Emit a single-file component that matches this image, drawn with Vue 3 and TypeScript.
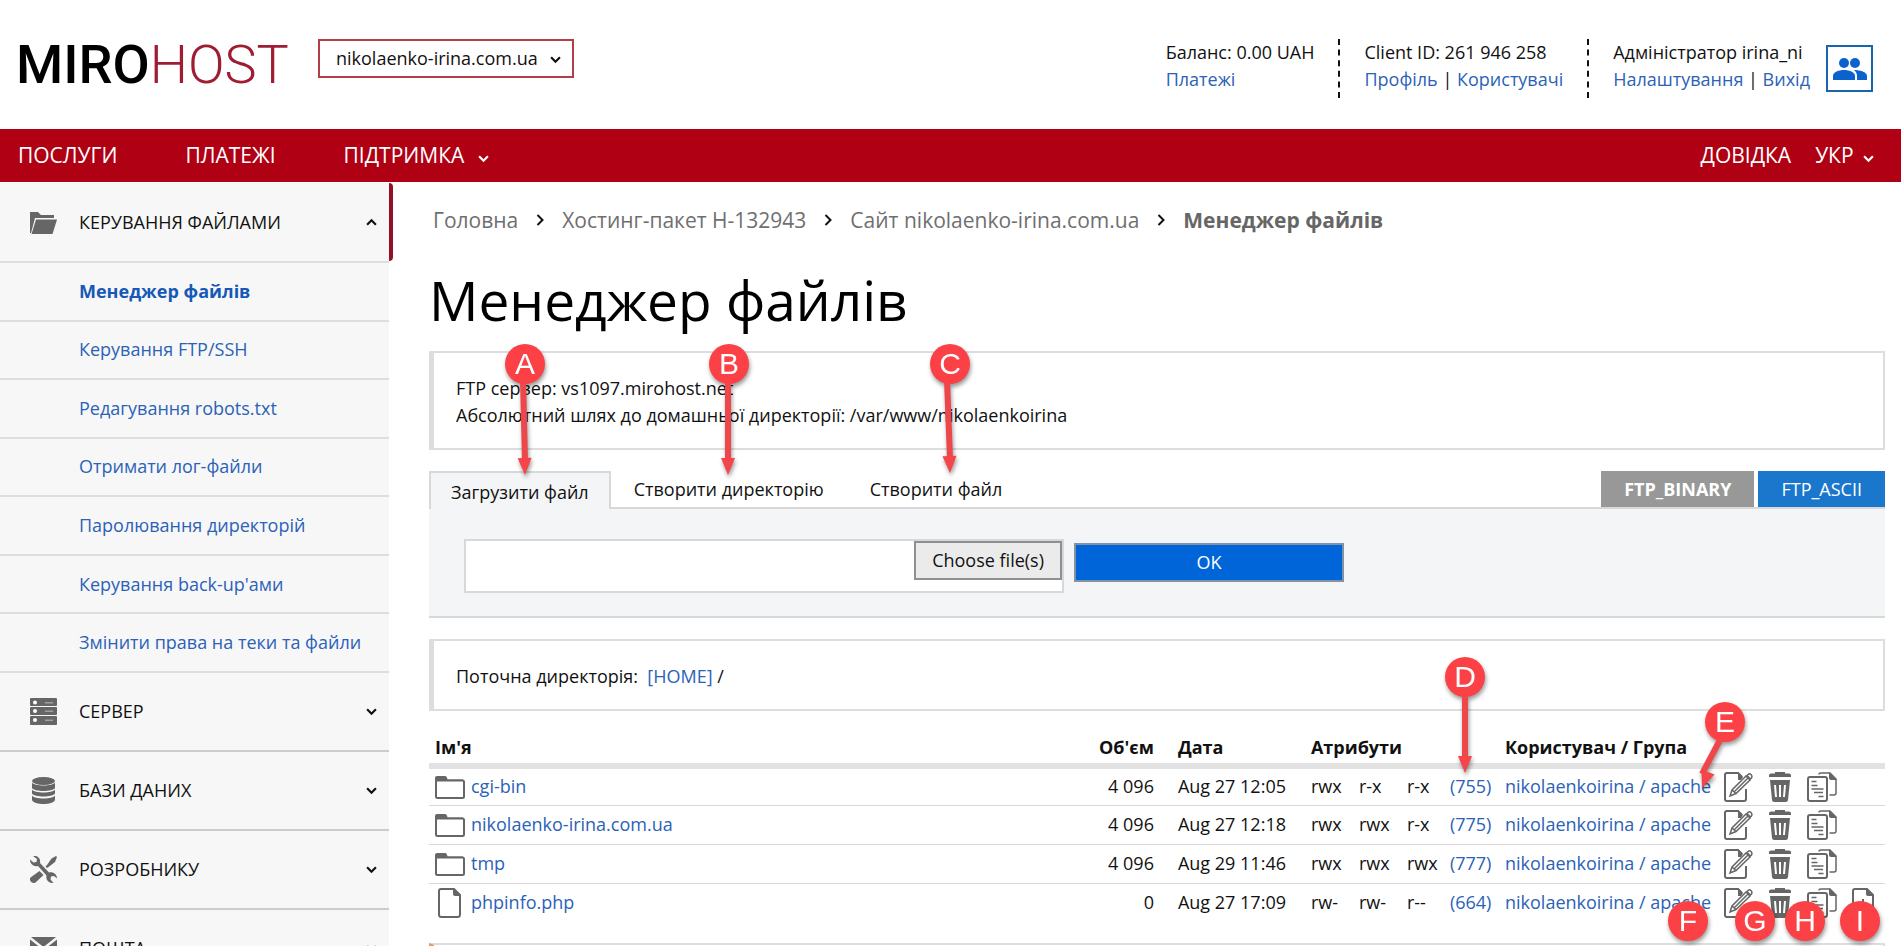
<script setup lang="ts">
import { ref } from 'vue'

interface FileRow {
  name: string
  kind: 'folder' | 'file'
  size: string
  date: string
  attrs: [string, string, string]
  mode: string
  owner: string
}

interface Marker {
  letter: string
  x: number
  y: number
  from?: [number, number]
  to?: [number, number]
}

const site = ref('nikolaenko-irina.com.ua')
const chosenFile = ref('')

const fileLinks: string[] = [
  'Менеджер файлів',
  'Керування FTP/SSH',
  'Редагування robots.txt',
  'Отримати лог-файли',
  'Паролювання директорій',
  "Керування back-up'ами",
  'Змінити права на теки та файли',
]

const sections: { label: string; icon: string }[] = [
  { label: 'СЕРВЕР', icon: 'server' },
  { label: 'БАЗИ ДАНИХ', icon: 'database' },
  { label: 'РОЗРОБНИКУ', icon: 'tools' },
  { label: 'ПОШТА', icon: 'mail' },
]

const crumbs: string[] = ['Головна', 'Хостинг-пакет Н-132943', 'Сайт nikolaenko-irina.com.ua']

const owner = 'nikolaenkoirina / apache'
const rows: FileRow[] = [
  { name: 'cgi-bin', kind: 'folder', size: '4 096', date: 'Aug 27 12:05', attrs: ['rwx', 'r-x', 'r-x'], mode: '(755)', owner },
  { name: 'nikolaenko-irina.com.ua', kind: 'folder', size: '4 096', date: 'Aug 27 12:18', attrs: ['rwx', 'rwx', 'r-x'], mode: '(775)', owner },
  { name: 'tmp', kind: 'folder', size: '4 096', date: 'Aug 29 11:46', attrs: ['rwx', 'rwx', 'rwx'], mode: '(777)', owner },
  { name: 'phpinfo.php', kind: 'file', size: '0', date: 'Aug 27 17:09', attrs: ['rw-', 'rw-', 'r--'], mode: '(664)', owner },
]

const markers: Marker[] = [
  { letter: 'A', x: 525, y: 364, from: [523, 380], to: [525, 475] },
  { letter: 'B', x: 729, y: 364, from: [728, 380], to: [728, 475] },
  { letter: 'C', x: 950, y: 364, from: [947, 380], to: [950, 473] },
  { letter: 'D', x: 1465, y: 677, from: [1465, 693], to: [1465, 773] },
  { letter: 'E', x: 1725, y: 722, from: [1721, 738], to: [1702, 788] },
  { letter: 'F', x: 1688, y: 921 },
  { letter: 'G', x: 1755, y: 921 },
  { letter: 'H', x: 1805, y: 921 },
  { letter: 'I', x: 1860, y: 921 },
]

function arrowHead(m: Marker): string {
  if (!m.from || !m.to) return ''
  const [x1, y1] = m.from
  const [x2, y2] = m.to
  const len = Math.hypot(x2 - x1, y2 - y1)
  const ux = (x2 - x1) / len
  const uy = (y2 - y1) / len
  const bx = x2 - ux * 17
  const by = y2 - uy * 17
  return `${x2},${y2} ${bx - uy * 7},${by + ux * 7} ${bx + uy * 7},${by - ux * 7}`
}
</script>

<template>
  <div class="page">
    <header class="top">
      <a class="logo" href="#" aria-label="MIROHOST"><span class="logo-a">MIRO</span><span class="logo-b">HOST</span></a>
      <div class="site">
        <select v-model="site" aria-label="Сайт">
          <option>nikolaenko-irina.com.ua</option>
        </select>
        <svg class="chev" viewBox="0 0 10 8"><path d="M1 2l4 4 4-4" /></svg>
      </div>
      <div class="account">
        <div class="acc">
          <span>Баланс: 0.00 UAH</span>
          <span><a href="#">Платежі</a></span>
        </div>
        <div class="acc">
          <span>Client ID: 261 946 258</span>
          <span><a href="#">Профіль</a> | <a href="#">Користувачі</a></span>
        </div>
        <div class="acc">
          <span>Адміністратор irina_ni</span>
          <span><a href="#">Налаштування</a> | <a href="#">Вихід</a></span>
        </div>
        <button class="users" type="button" aria-label="Користувачі">
          <svg viewBox="0 0 34 22">
            <circle cx="11" cy="5" r="5" /><circle cx="22" cy="5" r="5" />
            <path d="M0 22v-4c0-4 6-6 11-6s11 2 11 6v4z" />
            <path d="M24 22v-4c0-2.500-1-4.500-3-6 6 0 13 2 13 6v4z" />
          </svg>
        </button>
      </div>
    </header>

    <nav class="nav">
      <a href="#">ПОСЛУГИ</a>
      <a href="#">ПЛАТЕЖІ</a>
      <a href="#" class="drop">ПІДТРИМКА <svg class="chev" viewBox="0 0 10 8"><path d="M1 2l4 4 4-4" /></svg></a>
      <div class="nav-right">
        <a href="#">ДОВІДКА</a>
        <button type="button">УКР <svg class="chev" viewBox="0 0 10 8"><path d="M1 2l4 4 4-4" /></svg></button>
      </div>
    </nav>

    <div class="body">
      <aside class="side">
        <button class="head open" type="button">
          <svg class="ico" viewBox="0 0 27 27">
            <path d="M0 3h8l3 3h13v3H5L1 24H0z" />
            <path d="M6 10.500h21L22.500 25H1.500z" />
          </svg>
          <span>КЕРУВАННЯ ФАЙЛАМИ</span>
          <svg class="chev" viewBox="0 0 10 8"><path d="M1 6l4-4 4 4" /></svg>
        </button>
        <ul class="sub">
          <li v-for="(link, i) in fileLinks" :key="link" :class="{ current: i === 0 }"><a href="#">{{ link }}</a></li>
        </ul>
        <button v-for="s in sections" :key="s.label" class="head" type="button">
          <svg v-if="s.icon === 'server'" class="ico" viewBox="0 0 27 27">
            <rect width="27" height="8" rx="1" /><rect y="9" width="27" height="8" rx="1" /><rect y="18" width="27" height="9" rx="1" />
            <g class="hole"><circle cx="5" cy="4.500" r="2" /><circle cx="5" cy="13" r="2" /><circle cx="5" cy="22" r="2" /></g>
            <path class="tick" d="M15 4l1 1.500 1-1.500 1 1.500 1-1.500 1 1.500 1-1.500 1 1.500 1-1.500M15 12.500l1 1.500 1-1.500 1 1.500 1-1.500 1 1.500 1-1.500 1 1.500 1-1.500M15 21.500l1 1.500 1-1.500 1 1.500 1-1.500 1 1.500 1-1.500 1 1.500 1-1.500" />
          </svg>
          <svg v-else-if="s.icon === 'database'" class="ico" viewBox="0 0 27 27">
            <ellipse cx="13.500" cy="4" rx="11.500" ry="4" />
            <path d="M2 5.500c2 4 21 4 23 0v5.500c-2 4-21 4-23 0zM2 12.500c2 4 21 4 23 0v4c-2 4-21 4-23 0zM2 18.500c2 4 21 4 23 0V23c-2 5.300-21 5.300-23 0z" />
          </svg>
          <svg v-else-if="s.icon === 'tools'" class="ico" viewBox="0 0 27 27">
            <path d="M3 0c4-1 8 2 7 7l9 9.500c4-1 8 1.500 8 6l-3-2.500-3 .5-.5 3 3 3.500c-4.500.5-8-3-7-7.500L8 10C3.500 11 0 8 0 3.500l3.500 3L6.500 6 7 3z" />
            <path d="M26 0l1 1-2 5-6.500 5-1.500 1-1.500-1.500L17 9l4.500-6.500zM9.500 15l4 4-8 7.500c-3 2-7-2-5-5z" />
          </svg>
          <svg v-else class="ico" viewBox="0 0 27 27">
            <path d="M0 4.500V23h27V4.500L13.500 15z" /><path d="M1 2h25L13.500 12z" />
          </svg>
          <span>{{ s.label }}</span>
          <svg class="chev" viewBox="0 0 10 8"><path d="M1 2l4 4 4-4" /></svg>
        </button>
      </aside>

      <main class="main">
        <div class="crumbs">
          <template v-for="c in crumbs" :key="c">
            <a href="#">{{ c }}</a>
            <svg class="next" viewBox="0 0 8 12"><path d="M1.500 1l5 5-5 5" /></svg>
          </template>
          <strong>Менеджер файлів</strong>
        </div>
        <h1>Менеджер файлів</h1>

        <section class="note">
          <p>FTP сервер: vs1097.mirohost.net</p>
          <p>Абсолютний шлях до домашньої директорії: /var/www/nikolaenkoirina</p>
        </section>

        <div class="tabs">
          <button type="button" class="tab active">Загрузити файл</button>
          <button type="button" class="tab">Створити директорію</button>
          <button type="button" class="tab">Створити файл</button>
          <div class="modes">
            <button type="button" class="mode binary">FTP_BINARY</button>
            <button type="button" class="mode ascii">FTP_ASCII</button>
          </div>
        </div>
        <form class="panel" @submit.prevent>
          <div class="picker">
            <input v-model="chosenFile" type="text" aria-label="Файл" />
            <button type="button">Choose file(s)</button>
          </div>
          <button class="ok" type="submit">OK</button>
        </form>

        <section class="note">
          <p>Поточна директорія: &nbsp;<a href="#">[HOME]</a> /</p>
        </section>

        <table class="files">
          <colgroup>
            <col /><col class="w-size" /><col class="w-date" />
            <col class="w-attr" /><col class="w-attr" /><col class="w-last" />
            <col class="w-mode" /><col class="w-owner" />
            <col class="w-act" /><col class="w-del" /><col class="w-act" /><col class="w-get" />
          </colgroup>
          <thead>
            <tr>
              <th class="name">Ім'я</th>
              <th class="num">Об'єм</th>
              <th>Дата</th>
              <th colspan="4">Атрибути</th>
              <th colspan="5">Користувач / Група</th>
            </tr>
          </thead>
          <tbody>
            <tr v-for="r in rows" :key="r.name">
              <td class="name">
                <div class="entry">
                  <svg v-if="r.kind === 'folder'" class="fico" viewBox="0 0 30 30">
                    <path class="solid" d="M0 8V6q0-2 2-2h8q2 0 2.500 3.500H28V9H0z" />
                    <rect class="line" x="1" y="8.500" width="28" height="17.500" rx="1.500" />
                  </svg>
                  <svg v-else class="fico" viewBox="0 0 30 30">
                    <path class="line" d="M6 1h13l6 6v19.500q0 2.500-2.500 2.500h-16Q4 29 4 26.500V3q0-2 2-2z" />
                    <path class="solid" d="M18 0l8 8h-6q-2 0-2-2z" />
                  </svg>
                  <a href="#">{{ r.name }}</a>
                </div>
              </td>
              <td class="num">{{ r.size }}</td>
              <td>{{ r.date }}</td>
              <td v-for="(a, i) in r.attrs" :key="i">{{ a }}</td>
              <td><a href="#">{{ r.mode }}</a></td>
              <td><a href="#">{{ r.owner }}</a></td>
              <td>
                <button class="act" type="button" aria-label="Редагувати">
                  <svg viewBox="0 0 30 30">
                    <path class="line" d="M22 17v10q0 2-2 2H3q-2 0-2-2V3q0-2 2-2h11l4 4" />
                    <path class="solid" d="M14 0l5 5-2 3h-3z" />
                    <path class="thin" d="M6 24l2-6L22 4l4 4-14 13.500zM8 18l4 3.500M10 20L24 6" />
                    <path class="thin" d="M24 2.500q1.500-1.500 3 0t.5 3.500l-1 1-3.500-3.500z" />
                  </svg>
                </button>
              </td>
              <td>
                <button class="act" type="button" aria-label="Видалити">
                  <svg viewBox="0 0 30 30">
                    <path class="solid" d="M6 0h10v1.500h4q2 0 2 2V5H0V3.500q0-2 2-2h4zM1 8h20l-2 20q-.2 2-2.200 2H5.200Q3.200 30 3 28z" />
                    <path class="bars" d="M6 13l1 12M11 13v12M16 13l-1 12" />
                  </svg>
                </button>
              </td>
              <td>
                <button class="act" type="button" aria-label="Копіювати">
                  <svg viewBox="0 0 30 30">
                    <rect class="line" x="1" y="5" width="19" height="24" rx="2" />
                    <path class="thin" d="M12 2.500q0-1.500 2-1.500h9l6 6v14q0 2-2 2h-4.500M4.500 9.500h5M4.500 13.500h6M4.500 17h12M7 20.500h9M11.500 24.500h5" />
                    <path class="solid" d="M22 0l8 8h-6q-2 0-2-2z" />
                  </svg>
                </button>
              </td>
              <td>
                <button v-if="r.kind === 'file'" class="act" type="button" aria-label="Завантажити">
                  <svg viewBox="0 0 30 30">
                    <path class="line" d="M3 1h12l6 6v19.500q0 2.500-2.500 2.500h-15Q1 29 1 26.500V3q0-2 2-2zM11 11v12M7 19l4 4 4-4" />
                    <path class="solid" d="M14 0l8 8h-6q-2 0-2-2z" />
                  </svg>
                </button>
              </td>
            </tr>
          </tbody>
        </table>
        <section class="note warn"></section>
      </main>
    </div>

    <svg class="markers" width="1901" height="946" viewBox="0 0 1901 946">
      <g v-for="m in markers" :key="m.letter" class="marker">
        <g v-if="m.from && m.to">
          <line :x1="m.from[0]" :y1="m.from[1]" :x2="m.to[0]" :y2="m.to[1] - 14" />
          <polygon :points="arrowHead(m)" />
        </g>
        <circle :cx="m.x" :cy="m.y" r="20" />
        <text :x="m.x" :y="m.y + 10">{{ m.letter }}</text>
      </g>
    </svg>
  </div>
</template>

<style>
html,
body {
  margin: 0;
  background: #fff;
}
</style>

<style scoped>
* {
  box-sizing: border-box;
}
.page {
  position: relative;
  height: 100vh;
  overflow: hidden;
  font-family: "Open Sans", "Noto Sans", sans-serif;
  font-size: 18px;
  line-height: 27px;
  color: #111;
}
a {
  color: #2b62b8;
  text-decoration: none;
}
button,
input,
select {
  font: inherit;
  color: inherit;
  margin: 0;
  border-radius: 0;
}
button {
  cursor: pointer;
}
.chev {
  width: 11px;
  height: 9px;
  fill: none;
  stroke: currentColor;
  stroke-width: 2;
}

/* header */
.top {
  display: flex;
  align-items: flex-start;
  height: 129px;
  padding: 39px 28px 0 16px;
}
.logo {
  display: flex;
  width: 302px;
  font-family: Roboto, sans-serif;
  font-size: 54px;
  line-height: 52px;
}
.logo-a {
  color: #000;
  font-weight: 500;
}
.logo-b {
  color: #a01c32;
  font-weight: 300;
}
.site {
  position: relative;
  width: 256px;
}
.site select {
  display: block;
  width: 100%;
  height: 39px;
  padding: 0 16px;
  border: 2px solid #b23f45;
  background: #fff;
  appearance: none;
}
.site .chev {
  position: absolute;
  right: 13px;
  top: 16px;
  pointer-events: none;
}
.account {
  display: flex;
  margin-left: auto;
}
.acc {
  display: flex;
  flex-direction: column;
  height: 59px;
  padding-right: 24px;
  white-space: nowrap;
}
.acc + .acc {
  padding-left: 24px;
  border-left: 2px dashed #111;
}
.acc:nth-child(3) {
  padding-right: 16px;
}
.users {
  display: grid;
  place-items: center;
  width: 47px;
  height: 47px;
  margin-top: 6px;
  padding: 0;
  border: 2px solid #1766ad;
  background: #fff;
}
.users svg {
  width: 34px;
  height: 22px;
  fill: #0b62cf;
}

/* red bar */
.nav {
  display: flex;
  align-items: center;
  gap: 68px;
  height: 53px;
  padding: 0 27px 0 18px;
  background: #b00014;
  color: #fff;
  font-size: 21px;
}
.nav a {
  color: #fff;
}
.nav .chev {
  margin-left: 4px;
}
.nav .drop .chev {
  margin-left: 8px;
}
.nav-right {
  display: flex;
  align-items: center;
  gap: 24px;
  margin-left: auto;
}
.nav-right button {
  padding: 0;
  border: 0;
  background: none;
}

/* sidebar */
.body {
  display: flex;
  align-items: stretch;
  padding-top: 1px;
}
.side {
  flex: none;
  width: 389px;
  background: #f7f7f7;
}
.head {
  position: relative;
  display: flex;
  align-items: center;
  width: 100%;
  height: 79px;
  padding: 0 12px 0 30px;
  border: 0;
  border-bottom: 2px solid #ccc;
  background: none;
  text-align: left;
}
.head.open {
  height: 80px;
  border-bottom-color: #dedede;
}
.head.open::after {
  content: "";
  position: absolute;
  top: 0;
  left: 100%;
  width: 4px;
  height: 78px;
  border-radius: 0 4px 4px 0;
  background: #930f26;
}
.ico {
  flex: none;
  width: 27px;
  height: 27px;
  margin-right: 22px;
  fill: #666;
}
.ico .hole {
  fill: #fff;
}
.ico .tick {
  fill: none;
  stroke: #aaa;
}
.head .chev {
  margin-left: auto;
}
.sub {
  display: grid;
  grid-auto-rows: 1fr;
  height: 410px;
  margin: 0;
  padding: 0;
  list-style: none;
}
.sub li {
  display: flex;
  align-items: center;
  padding-left: 79px;
  border-bottom: 2px solid #dedede;
}
.sub .current a {
  color: #1558b8;
  font-weight: 700;
}

/* content */
.main {
  flex: 1;
  min-width: 0;
  padding: 22px 16px 0 40px;
}
.crumbs {
  display: flex;
  align-items: center;
  gap: 18px;
  padding-left: 4px;
  font-size: 21px;
  line-height: 30px;
}
.crumbs a {
  color: #6f6f6f;
}
.crumbs strong {
  color: #666;
}
.next {
  width: 8px;
  height: 12px;
  fill: none;
  stroke: #111;
  stroke-width: 2;
}
h1 {
  margin: 27px 0 13px;
  font-size: 55px;
  font-weight: 400;
  line-height: 76px;
  color: #000;
}
.note {
  padding: 22px 22px 19px;
  border: 2px solid #ddd;
  border-left-width: 5px;
}
.note p {
  margin: 0;
}
.tabs {
  display: flex;
  align-items: flex-start;
  height: 38px;
  margin-top: 21px;
  border-bottom: 2px solid #d6d8da;
}
.tab {
  height: 36px;
  padding: 0 23px;
  border: 0;
  background: #fff;
}
.tab.active {
  height: 38px;
  padding: 2px 20px 0;
  border: 2px solid #d6d8da;
  border-bottom: 0;
  background: #f4f5f7;
}
.modes {
  display: flex;
  gap: 4px;
  margin-left: auto;
}
.mode {
  height: 36px;
  padding: 0 23px;
  border: 0;
  color: #fff;
}
.binary {
  background: #989898;
  font-weight: 700;
}
.ascii {
  background: #1a77cb;
}
.panel {
  display: flex;
  align-items: flex-start;
  gap: 10px;
  height: 109px;
  padding: 30px 35px 0;
  border-bottom: 2px solid #d6d8da;
  background: #f4f5f7;
}
.picker {
  display: flex;
  align-items: flex-start;
  width: 600px;
  height: 54px;
  border: 2px solid #d6d8da;
  background: #fff;
}
.picker input {
  flex: 1;
  min-width: 0;
  height: 50px;
  padding: 0 12px;
  border: 0;
  outline: 0;
  background: none;
}
.picker button {
  height: 39px;
  padding: 0 16px;
  border: 2px solid #8f8f8f;
  background: #ebebeb;
}
.ok {
  width: 270px;
  height: 39px;
  margin-top: 4px;
  padding: 0;
  border: 2px solid #8193a3;
  background: #0065d9;
  color: #fff;
}
.panel + .note {
  margin-top: 21px;
}

/* file table */
.files {
  width: 100%;
  margin-top: 21px;
  border-collapse: collapse;
  table-layout: fixed;
}
.w-size { width: 90px; }
.w-date { width: 133px; }
.w-attr { width: 48px; }
.w-last { width: 43px; }
.w-mode { width: 55px; }
.w-owner { width: 219px; }
.w-act { width: 45px; }
.w-del { width: 38px; }
.w-get { width: 45px; }
.files th,
.files td {
  height: 39px;
  padding: 0 0 0 12px;
  border-bottom: 1px solid #d9d9d9;
  text-align: left;
  white-space: nowrap;
}
.files th {
  height: 34px;
  border-bottom: 6px solid #e2e2e2;
}
.files tr:last-child td {
  border-bottom: 0;
}
.files .name {
  padding-left: 6px;
}
.files .num {
  padding: 0 12px 0 0;
  text-align: right;
}
.entry {
  display: flex;
  align-items: center;
  gap: 6px;
}
.fico {
  width: 30px;
  height: 30px;
}
.act {
  display: block;
  width: 30px;
  height: 30px;
  padding: 0;
  border: 0;
  background: none;
}
.act svg {
  display: block;
  width: 30px;
  height: 30px;
}
.solid {
  fill: #666;
}
.line,
.thin {
  fill: none;
  stroke: #666;
  stroke-width: 2;
}
.thin {
  stroke-width: 1.5;
}
.bars {
  fill: none;
  stroke: #fff;
  stroke-width: 2;
}
.warn {
  margin-top: 21px;
  border-left-color: #e9975a;
}

/* lettered markers over the page */
.markers {
  position: absolute;
  top: 0;
  left: 0;
  pointer-events: none;
}
.marker {
  filter: drop-shadow(1px 3px 2px rgba(0, 0, 0, 0.4));
}
.marker line {
  stroke: #ee474b;
  stroke-width: 6;
}
.marker polygon {
  fill: #f5444a;
}
.marker circle {
  fill: #fc4146;
}
.marker text {
  fill: #fff;
  font-family: "Liberation Sans", Arial, sans-serif;
  font-size: 30px;
  text-anchor: middle;
}
</style>
